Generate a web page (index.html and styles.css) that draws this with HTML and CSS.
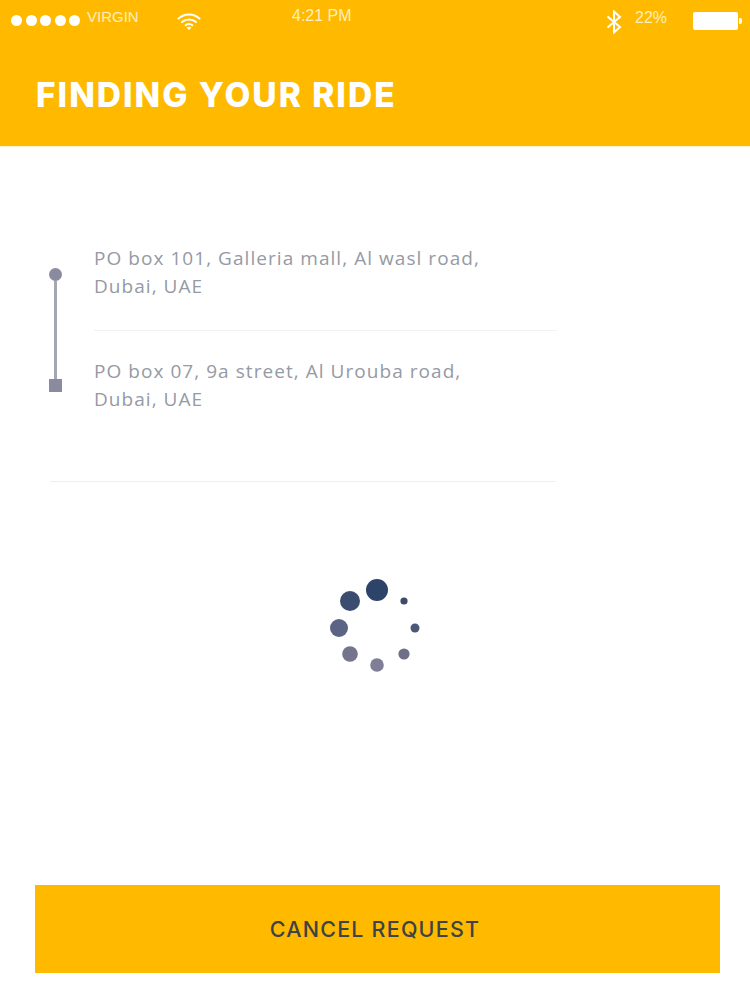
FILE: index.html
```html
<!DOCTYPE html>
<html lang="en">
<head>
<meta charset="utf-8">
<title>Finding your ride</title>
<link rel="stylesheet" href="styles.css">
</head>
<body>
<div class="page">
  <header class="header">
    <div class="status">
      <div class="signal"><i></i><i></i><i></i><i></i><i></i></div>
      <span class="carrier">VIRGIN</span>
      <svg class="wifi" width="24" height="20" viewBox="0 0 24 20" fill="none" stroke="#fff" stroke-linecap="round">
        <path d="M1.5 7.5C7.5 2 16.5 2 22.5 7.5" stroke-width="2"/>
        <path d="M5 11C9 7.5 15 7.5 19 11" stroke-width="2"/>
        <path d="M8.5 14.3C10.5 12.8 13.5 12.8 15.5 14.3" stroke-width="1.8"/>
        <path d="M9.5 16.5L12 19L14.5 16.5C13 15.4 11 15.4 9.5 16.5Z" fill="#fff" stroke="none"/>
      </svg>
      <span class="time">4:21 PM</span>
      <svg class="bt" width="16" height="24" viewBox="0 0 16 24" fill="none" stroke="#fff" stroke-width="2">
        <path d="M1.5 6.5L14 17L8 22.5V1.5L14 7L1.5 17.5"/>
      </svg>
      <span class="percent">22%</span>
      <div class="battery"><div class="cell"></div><div class="nub"></div></div>
    </div>
    <h1 class="title">FINDING YOUR RIDE</h1>
  </header>

  <main class="main">
    <section class="route">
      <div class="trip">
        <div class="rail">
          <span class="stop-dot"></span>
          <span class="rail-line"></span>
          <span class="stop-square"></span>
        </div>
        <div class="places">
          <p class="place">PO box 101, Galleria mall, Al wasl road,<br>Dubai, UAE</p>
          <div class="place-rule"></div>
          <p class="place">PO box 07, 9a street, Al Urouba road,<br>Dubai, UAE</p>
        </div>
      </div>
      <div class="route-rule"></div>
    </section>

    <div class="spinner">
      <svg width="100" height="100" viewBox="0 0 100 100">
        <circle cx="50" cy="14" r="11" fill="#2e4369"/>
        <circle cx="23" cy="25" r="10" fill="#3a4c70"/>
        <circle cx="12" cy="52" r="9" fill="#5b6485"/>
        <circle cx="23" cy="78" r="7.8" fill="#75748e"/>
        <circle cx="50" cy="89" r="6.8" fill="#7f7e96"/>
        <circle cx="77" cy="78" r="5.6" fill="#6f6f8a"/>
        <circle cx="88" cy="52" r="4.5" fill="#4d5878"/>
        <circle cx="77" cy="25" r="3.6" fill="#3c4a6c"/>
      </svg>
    </div>

    <button class="cancel" type="button">CANCEL REQUEST</button>
  </main>
</div>
</body>
</html>
```

FILE: styles.css
```css
* { box-sizing: border-box; }
html, body { margin: 0; padding: 0; background: #fff; }
.page {
  width: 750px;
  height: 1000px;
  display: flex;
  flex-direction: column;
  overflow: hidden;
}
.header {
  height: 146px;
  background: #ffba00;
  color: #fff;
  display: flex;
  flex-direction: column;
  box-shadow: 0 1px 0 #fff3d0;
}
.status {
  height: 36px;
  padding: 5px 12px 0 11px;
  display: flex;
  align-items: flex-start;
  font-family: "Liberation Sans", Arial, sans-serif;
  line-height: 24px;
  color: #ffeebf;
}
.signal { display: flex; gap: 3.5px; margin-top: 10px; width: 76px; flex: none; }
.signal i {
  display: block;
  flex: none;
  width: 11px;
  height: 11px;
  border-radius: 50%;
  background: #fff;
}
.carrier { width: 90px; font-size: 15px; flex: none; }
.wifi { margin-top: 6px; width: 24px; margin-right: 91px; flex: none; }
.time { width: 314px; margin-top: -1px; font-size: 16px; flex: none; }
.bt { margin-top: 5px; width: 16px; margin-right: 13px; flex: none; }
.percent { width: 58px; margin-top: 1px; font-size: 16px; flex: none; font-weight: 400; }
.battery { display: flex; align-items: center; margin-top: 7px; flex: none; }
.cell { width: 45px; height: 18px; background: #fff; border-radius: 2px; }
.nub { width: 3px; height: 6px; background: #fff; border-radius: 0 2px 2px 0; margin-left: 1px; }
.title {
  margin: 36px 0 0 36px;
  font-family: Inter, "Liberation Sans", sans-serif;
  font-size: 33.5px;
  line-height: 46px;
  font-weight: 800;
  letter-spacing: 2px;
  white-space: nowrap;
}
.main {
  flex: 1;
  display: flex;
  flex-direction: column;
  padding-top: 98px;
}
.route { padding-left: 48px; }
.trip { display: flex; }
.rail {
  width: 14px;
  margin-top: 24px;
  height: 124px;
  display: flex;
  flex-direction: column;
  align-items: center;
  flex: none;
}
.stop-dot { width: 13px; height: 13px; border-radius: 50%; background: #8a8b9f; flex: none; }
.rail-line { width: 3px; flex: 1; background: #a5a7b3; }
.stop-square { width: 13px; height: 13px; background: #8a8b9f; flex: none; }
.places { margin-left: 32px; width: 463px; }
.place {
  margin: 0;
  font-family: "Open Sans", "Liberation Sans", sans-serif;
  font-size: 19px;
  line-height: 28px;
  letter-spacing: 1.05px;
  color: #959aa4;
  white-space: nowrap;
}
.place-rule { height: 1px; background: #f1f1f3; margin: 30px 0 26px; }
.route-rule { height: 1px; background: #efeff1; width: 506px; margin: 68px 0 0 2px; }
.spinner {
  display: flex;
  justify-content: center;
  margin: 94px 0 0 4px;
}
.spinner svg { display: block; }
.cancel {
  margin: auto 0 27px 35px;
  width: 685px;
  height: 88px;
  border: 0;
  padding: 0 5px 0 0;
  background: #ffba00;
  color: #3d4346;
  font-family: Inter, "Liberation Sans", sans-serif;
  font-size: 21.5px;
  font-weight: 500;
  letter-spacing: 1.2px;
}
```
